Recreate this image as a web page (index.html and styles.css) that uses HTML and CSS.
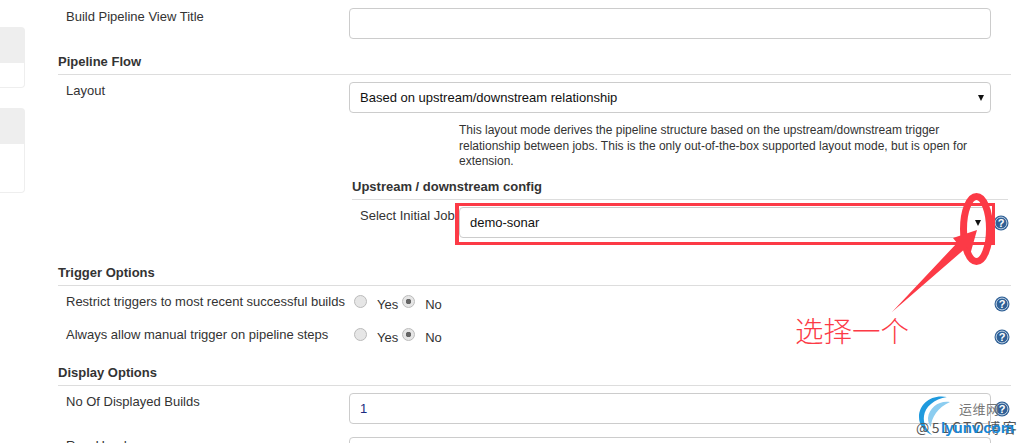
FILE: index.html
```html
<!DOCTYPE html>
<html lang="en">
<head>
  <meta charset="UTF-8">
  <title>Build Pipeline View</title>
  <link rel="stylesheet" href="styles.css">
</head>
<body>
  <div class="page">
    <aside class="side">
      <div class="side-box box-a"><div class="side-head"></div></div>
      <div class="side-box box-b"><div class="side-head"></div></div>
    </aside>

    <form class="main">
      <div class="row row-title">
        <div class="label">Build Pipeline View Title</div>
        <input class="field" type="text">
      </div>

      <h3 class="section sec-flow">Pipeline Flow</h3>
      <div class="row">
        <div class="label">Layout</div>
        <div class="select">Based on upstream/downstream relationship<span class="arrow"></span></div>
      </div>
      <p class="desc">This layout mode derives the pipeline structure based on the upstream/downstream trigger relationship between jobs. This is the only out-of-the-box supported layout mode, but is open for extension.</p>

      <div class="sub">
        <h4 class="sub-title">Upstream / downstream config</h4>
        <div class="sub-row">
          <div class="sub-label">Select Initial Job</div>
          <div class="select select-job">demo-sonar<span class="arrow"></span></div>
          <span class="help"><svg viewBox="0 0 16 16"><circle cx="8" cy="8" r="7.5" fill="#2f6096"/><circle cx="8" cy="8" r="5.9" fill="none" stroke="#cfdcea" stroke-width="0.9"/><text x="8" y="12" text-anchor="middle">?</text></svg></span>
        </div>
      </div>

      <h3 class="section sec-trigger">Trigger Options</h3>
      <div class="row radio-row">
        <div class="label">Restrict triggers to most recent successful builds</div>
        <div class="radios">
          <input class="radio" type="radio" name="r1"><span class="opt">Yes</span>
          <input class="radio" type="radio" name="r1" checked><span class="opt">No</span>
        </div>
        <span class="help"><svg viewBox="0 0 16 16"><circle cx="8" cy="8" r="7.5" fill="#2f6096"/><circle cx="8" cy="8" r="5.9" fill="none" stroke="#cfdcea" stroke-width="0.9"/><text x="8" y="12" text-anchor="middle">?</text></svg></span>
      </div>
      <div class="row radio-row">
        <div class="label">Always allow manual trigger on pipeline steps</div>
        <div class="radios">
          <input class="radio" type="radio" name="r2"><span class="opt">Yes</span>
          <input class="radio" type="radio" name="r2" checked><span class="opt">No</span>
        </div>
        <span class="help"><svg viewBox="0 0 16 16"><circle cx="8" cy="8" r="7.5" fill="#2f6096"/><circle cx="8" cy="8" r="5.9" fill="none" stroke="#cfdcea" stroke-width="0.9"/><text x="8" y="12" text-anchor="middle">?</text></svg></span>
      </div>

      <h3 class="section sec-display">Display Options</h3>
      <div class="row">
        <div class="label">No Of Displayed Builds</div>
        <input class="field" type="text" value="1">
        <span class="help"><svg viewBox="0 0 16 16"><circle cx="8" cy="8" r="7.5" fill="#2f6096"/><circle cx="8" cy="8" r="5.9" fill="none" stroke="#cfdcea" stroke-width="0.9"/><text x="8" y="12" text-anchor="middle">?</text></svg></span>
      </div>
      <div class="row row-last">
        <div class="label">Row Headers</div>
        <input class="field" type="text">
      </div>
    </form>

    <!-- red markup drawn over the screenshot -->
    <div class="mark-box"></div>
    <svg class="mark-svg" width="1022" height="443" viewBox="0 0 1022 443">
      <ellipse cx="976.5" cy="229" rx="13" ry="32.5" fill="none" stroke="#fc3a46" stroke-width="7"/>
      <path d="M892 312 L957 243 L953 238 L977 230 L970 255 L967 247 Z" fill="#fc3a46"/>
    </svg>
    <div class="mark-text">选择一个</div>

    <!-- watermark -->
    <svg class="wm-logo" width="40" height="44" viewBox="0 0 40 44">
      <path d="M31 3 C15 0 3 10 3 23 C3 31 8 37 16 41 C10 35 7 29 8 22 C9 13 18 5 31 3 Z" fill="#1f9ade"/>
      <path d="M34 8 C24 6 13 13 12 24 C12 28 13 31 15 33 C15 24 22 13 34 8 Z" fill="#8ccdf0"/>
    </svg>
    <div class="wm-top">运维网</div>
    <div class="wm-bottom">@51CTO博客</div>
    <div class="wm-blue">lyunv.com</div>
  </div>
</body>
</html>
```

FILE: styles.css
```css
html, body {
  margin: 0;
  padding: 0;
  background: #fff;
}

body {
  font-family: "Liberation Sans", Arial, sans-serif;
  font-size: 13px;
  color: #333;
}

.page {
  position: relative;
  width: 1022px;
  height: 443px;
  overflow: hidden;
  display: flex;
}

.side {
  width: 25px;
  padding-top: 27px;
  flex: none;
}

.side-box {
  border: 1px solid #eee;
  border-left: 0;
  border-radius: 0 4px 4px 0;
  box-sizing: border-box;
  background: #fff;
}

.box-a {
  height: 61px;
  margin-bottom: 20px;
}

.box-b {
  height: 85px;
}

.side-head {
  height: 35px;
  background: #eee;
}

.main {
  width: 953px;
  margin-left: 33px;
  padding-top: 8px;
  flex: none;
}

.row {
  display: flex;
  align-items: flex-start;
}

.label {
  width: 291px;
  padding: 1px 0 0 8px;
  box-sizing: border-box;
  flex: none;
  line-height: 15px;
}

.field, .select {
  width: 642px;
  height: 31px;
  box-sizing: border-box;
  border: 1px solid #ccc;
  border-radius: 4px;
  background: #fff;
  padding: 0 10px;
  font: 13px "Liberation Sans", Arial, sans-serif;
  color: #111;
  flex: none;
  line-height: 29px;
  position: relative;
}

.field {
  color: #1a2a80;
}

.arrow {
  position: absolute;
  right: 6px;
  top: 12px;
  border-left: 3.5px solid transparent;
  border-right: 3.5px solid transparent;
  border-top: 6px solid #111;
}

.select-job .arrow {
  right: 9px;
}

.section {
  margin: 0 0 7px;
  font-size: 13px;
  font-weight: bold;
  color: #333;
  line-height: 15px;
  padding-bottom: 5px;
  border-bottom: 1px solid #ddd;
}

.sec-flow {
  margin-top: 15px;
}

.desc {
  margin: 10px 0 0 401px;
  width: 520px;
  font-size: 12px;
  line-height: 15.5px;
}

.sub {
  margin: 9px 3px 0 294px;
}

.sub-title {
  margin: 0 0 7px;
  font-size: 13px;
  line-height: 15px;
  padding-bottom: 5px;
  border-bottom: 1px solid #ddd;
}

.sub-row {
  display: flex;
  align-items: flex-start;
}

.sub-label {
  width: 107px;
  padding: 1px 0 0 8px;
  box-sizing: border-box;
  line-height: 15px;
  flex: none;
  white-space: nowrap;
}

.select-job {
  width: 532px;
}

.help {
  width: 16px;
  height: 16px;
  flex: none;
  margin: 8px 0 0 3px;
}

.sub-row .help {
  margin-left: 2px;
}

.help svg {
  display: block;
  width: 16px;
  height: 16px;
}

.help text {
  font: bold 11px "Liberation Sans", Arial, sans-serif;
  fill: #fff;
}

.sec-trigger {
  margin-top: 27px;
}

.radio-row {
  height: 33px;
}

.radio-row .label {
  white-space: nowrap;
}

.radios {
  width: 642px;
  flex: none;
  display: flex;
  align-items: center;
  height: 21px;
}

.radio {
  appearance: none;
  width: 13px;
  height: 13px;
  margin: 0 0 3px 5px;
  border: 1px solid #bbb;
  border-radius: 50%;
  background: #e6e6e6;
  box-sizing: border-box;
}

.radio:checked {
  margin-left: 4px;
  background: radial-gradient(circle, #666 0 2.5px, #e6e6e6 3px);
}

.opt {
  margin-left: 10px;
  margin-top: 2px;
}

.radio-row .help {
  margin-top: 3px;
}

.sec-display {
  margin-top: 6px;
}

.row-last {
  margin-top: 13px;
}

/* annotation overlay */
.mark-box {
  position: absolute;
  left: 455px;
  top: 203px;
  width: 540px;
  height: 42px;
  box-sizing: border-box;
  border: 3px solid #fc3a46;
  border-left-width: 4px;
}

.mark-svg {
  position: absolute;
  left: 0;
  top: 0;
}

.mark-text {
  position: absolute;
  left: 795px;
  top: 312px;
  font-family: "Noto Sans CJK SC", sans-serif;
  font-weight: 300;
  font-size: 28.5px;
  line-height: 36px;
  color: #fc3a46;
  white-space: nowrap;
}

.wm-logo {
  position: absolute;
  left: 916px;
  top: 394px;
}

.wm-top {
  position: absolute;
  left: 959px;
  top: 400px;
  font-family: "Noto Sans CJK SC", sans-serif;
  font-size: 13px;
  line-height: 18px;
  letter-spacing: 0.5px;
  color: #777;
  white-space: nowrap;
}

.wm-bottom {
  position: absolute;
  left: 916px;
  top: 418px;
  font-family: "Noto Sans CJK SC", sans-serif;
  font-size: 14px;
  line-height: 18px;
  letter-spacing: 2.4px;
  color: #555;
  white-space: nowrap;
}

.wm-blue {
  position: absolute;
  left: 941px;
  top: 418px;
  font-size: 15px;
  font-weight: bold;
  line-height: 20px;
  color: #1787d6;
  white-space: nowrap;
}
```
